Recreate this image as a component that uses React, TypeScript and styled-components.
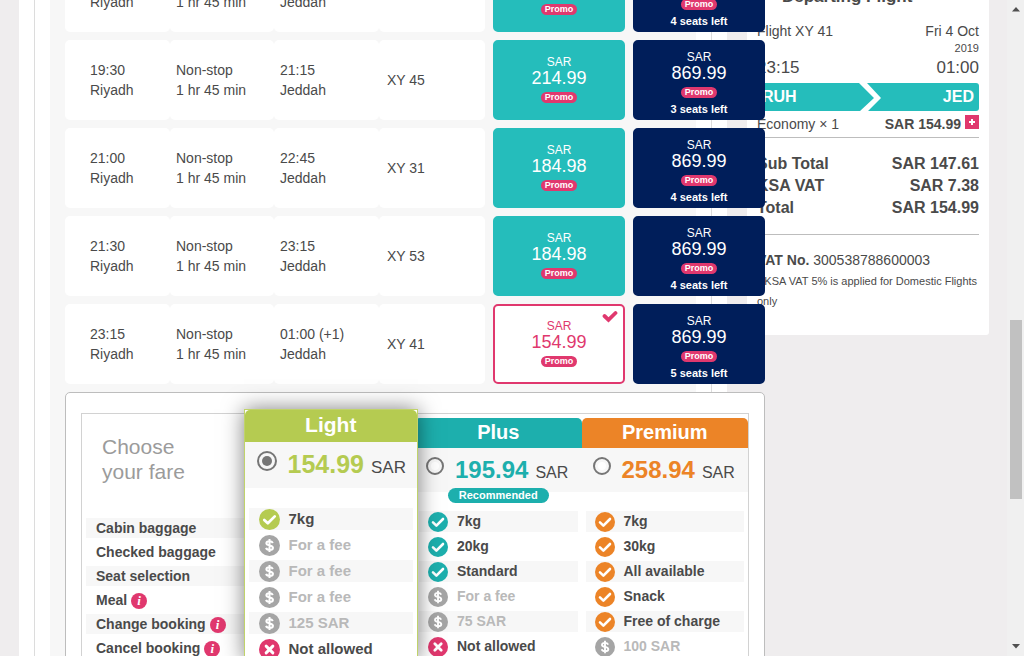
import React, { useState } from "react";
import styled, { createGlobalStyle } from "styled-components";

const color = {
  page: "#efedee",
  panel: "#f7f7f7",
  text: "#4a4a4a",
  muted: "#b9b9b9",
  teal: "#25bdbb",
  plus: "#1dafad",
  navy: "#001e5a",
  pink: "#e0386e",
  light: "#b5cb51",
  premium: "#ec8427",
  grey: "#a5a5a5",
  rule: "#bdbdbd",
};

const GlobalStyle = createGlobalStyle`
  * { box-sizing: border-box; }
  body {
    margin: 0;
    background: ${color.page};
    color: ${color.text};
    font: 14px/20px "Liberation Sans", Arial, sans-serif;
  }
  button { font-family: inherit; }
  ul, h2, h3, p { margin: 0; padding: 0; }
  ul { list-style: none; }
`;

/* ---------- page shell ---------- */

const Shell = styled.div`
  display: flex;
  height: 100vh;
  overflow: hidden;
`;

const Content = styled.div`
  flex: 1;
  min-width: 0;
  display: flex;
  align-items: flex-start;
  gap: 20px;
  margin-top: -48px;
  padding: 0 18px 0 19px;
`;

const Main = styled.main`
  flex: 1;
  min-width: 0;
  background: #fff;
  padding: 0 15px;
  position: relative;
  z-index: 1;
`;

const Frame = styled.div`
  border: solid #dcdcdc;
  border-width: 0 1px;
  padding: 0 15px;
`;

const Results = styled.div`
  background: ${color.panel};
  padding-left: 15px;
`;

const ScrollTrack = styled.div`
  width: 17px;
  display: flex;
  flex-direction: column;
  align-items: center;
  padding: 7px 0;
  background: #f0f0f0;
`;

const ScrollThumb = styled.div`
  width: 12px;
  height: 179px;
  margin: 308px 0 auto;
  background: #c1c1c1;
`;

/* ---------- flight list ---------- */

const Flights = styled.table`
  display: block;
  min-width: 700px;
`;

const FlightBody = styled.tbody`
  display: flex;
  flex-direction: column;
  gap: 8px;
`;

const FlightRow = styled.tr`
  display: grid;
  grid-template-columns: 105fr 104fr 105fr 106fr 140px 140px;
  height: 80px;
`;

const FlightCell = styled.td<{ $first?: boolean; $last?: boolean }>`
  display: flex;
  flex-direction: column;
  justify-content: center;
  padding: 0 0 0 ${(p) => (p.$first ? 25 : p.$last ? 8 : 6)}px;
  border-radius: 5px;
  background: #fff;
`;

const PriceCell = styled.td`
  display: flex;
  padding: 0 0 0 8px;
`;

type Tone = "teal" | "navy" | "chosen";

const PriceButton = styled.button<{ $tone: Tone }>`
  position: relative;
  flex: 1;
  display: flex;
  flex-direction: column;
  align-items: center;
  padding: ${(p) => (p.$tone === "navy" ? 8 : 13)}px 0 0;
  border: 2px solid
    ${(p) => (p.$tone === "chosen" ? color.pink : color[p.$tone])};
  border-radius: 5px;
  background: ${(p) => (p.$tone === "chosen" ? "#fff" : color[p.$tone])};
  color: ${(p) => (p.$tone === "chosen" ? color.pink : "#fff")};
  font-size: 12px;
  line-height: 14px;
`;

const Amount = styled.span`
  font-size: 18px;
  line-height: 18px;
`;

const Promo = styled.span`
  margin-top: 5px;
  padding: 0 4px;
  border-radius: 6px;
  background: ${color.pink};
  color: #fff;
  font-size: 9px;
  font-weight: bold;
  line-height: 11px;
`;

const Seats = styled.span`
  margin-top: 4px;
  font-size: 11px;
  font-weight: bold;
`;

const Tick = styled.svg`
  position: absolute;
  top: 4px;
  right: 5px;
`;

/* ---------- fare chooser ---------- */

const FareBox = styled.section`
  min-width: 700px;
  margin-top: 8px;
  padding: 20px 15px;
  border: 1px solid ${color.rule};
  border-radius: 5px;
  background: #fff;
`;

const FareGrid = styled.div`
  display: grid;
  grid-template-columns: repeat(4, minmax(0, 1fr));
  border: 1px solid #d2d2d2;
  padding-bottom: 40px;
`;

const FareLabels = styled.div`
  padding: 20px 4px 0;
`;

const FareTitle = styled.h2`
  padding-left: 16px;
  color: #9b9b9b;
  font-size: 21px;
  font-weight: normal;
  line-height: 25px;
`;

const LabelList = styled.ul`
  display: grid;
  gap: 4px;
  margin-top: 34px;
  font-weight: bold;
`;

const LabelRow = styled.li`
  display: flex;
  align-items: center;
  gap: 4px;
  height: 20px;
  padding-left: 10px;
  &:nth-child(odd) {
    background: ${color.panel};
  }
`;

const InfoButton = styled.button`
  width: 16px;
  height: 16px;
  margin-top: 2px;
  padding: 0;
  border: 0;
  border-radius: 50%;
  background: ${color.pink};
  color: #fff;
  font: italic bold 13px/16px "Liberation Serif", serif;
`;

const Fare = styled.div<{ $tone: string; $featured?: boolean }>`
  --tone: ${(p) => p.$tone};
  margin: ${(p) => (p.$featured ? "-5px -3px 0 -5px" : "4px 0 0")};
  ${(p) =>
    p.$featured &&
    `
    position: relative;
    z-index: 1;
    border: 1px solid #c0d36a;
    background: #fff;
    box-shadow: 0 0 20px rgba(0, 0, 0, 0.5);
    font-size: 15px;
  `}
`;

const FareName = styled.h3<{ $featured?: boolean }>`
  height: ${(p) => (p.$featured ? 32 : 30)}px;
  border-radius: 5px 5px 0 0;
  background: var(--tone);
  color: #fff;
  font-size: ${(p) => (p.$featured ? 21 : 20)}px;
  line-height: ${(p) => (p.$featured ? 30 : 28)}px;
  text-align: center;
`;

const FarePick = styled.label<{ $featured?: boolean }>`
  display: flex;
  align-items: flex-start;
  gap: 11px;
  height: ${(p) => (p.$featured ? 46 : 44)}px;
  padding: 9px 0 0 ${(p) => (p.$featured ? 12 : 11)}px;
  background: ${color.panel};
  font-size: ${(p) => (p.$featured ? 17 : 16)}px;
  line-height: 26px;
`;

const Radio = styled.input<{ $featured?: boolean }>`
  appearance: none;
  flex: none;
  width: ${(p) => (p.$featured ? 20 : 18)}px;
  height: ${(p) => (p.$featured ? 20 : 18)}px;
  margin: 0;
  padding: 3px;
  border: 2px solid #767676;
  border-radius: 50%;
  background: #fff content-box;
  &:checked {
    background-color: #767676;
  }
`;

const FarePrice = styled.span`
  display: flex;
  align-items: baseline;
  gap: 7px;
`;

const FareAmount = styled.strong<{ $featured?: boolean }>`
  color: var(--tone);
  font-size: ${(p) => (p.$featured ? 25 : 24)}px;
`;

const TagLine = styled.div<{ $featured?: boolean }>`
  display: flex;
  justify-content: center;
  height: ${(p) => (p.$featured ? 20 : 19)}px;
`;

const Tag = styled.span`
  height: 15px;
  margin-top: -4px;
  padding: 0 11px;
  border-radius: 8px;
  background: var(--tone);
  color: #fff;
  font-size: 11px;
  font-weight: bold;
  line-height: 14px;
`;

const Perks = styled.ul`
  display: grid;
  gap: 4px;
  margin: 0 4px;
  font-weight: bold;
`;

const Perk = styled.li<{ $featured?: boolean; $muted?: boolean }>`
  display: flex;
  align-items: center;
  gap: 9px;
  height: ${(p) => (p.$featured ? 22 : 21)}px;
  padding: ${(p) => (p.$featured ? "0 0 0 10px" : "0 0 1px 9px")};
  color: ${(p) => (p.$muted ? color.muted : color.text)};
  &:nth-child(odd) {
    background: ${color.panel};
  }
`;

/* ---------- booking summary ---------- */

const Summary = styled.aside`
  width: 242px;
  padding: 35px 10px 24px;
  border-radius: 0 0 3px 3px;
  background: #fff;
`;

const SummaryTitle = styled.h2`
  padding-left: 25px;
  font-size: 17px;
  line-height: 20px;
  white-space: nowrap;
`;

const Line = styled.div<{ $size?: number; $height?: number; $bold?: boolean }>`
  display: flex;
  justify-content: space-between;
  align-items: center;
  height: ${(p) => p.$height || 22}px;
  font-size: ${(p) => p.$size || 14}px;
  font-weight: ${(p) => (p.$bold ? "bold" : "normal")};
`;

const FlightInfo = styled.div`
  margin-top: 13px;
`;

const Year = styled.p`
  font-size: 11px;
  line-height: 12px;
  text-align: right;
`;

const Route = styled.div`
  display: flex;
  align-items: center;
  justify-content: space-between;
  height: 28px;
  margin: 2px 0;
  padding: 0 5px;
  border-radius: 3px;
  background: ${color.teal};
  color: #fff;
  font-size: 16px;
  font-weight: bold;
`;

const FareSum = styled.span`
  display: flex;
  align-items: center;
  gap: 4px;
  font-weight: bold;
`;

const MoreButton = styled.button`
  display: flex;
  align-items: center;
  justify-content: center;
  width: 14px;
  height: 14px;
  margin-bottom: 4px;
  padding: 0;
  border: 0;
  background: ${color.pink};
`;

const Totals = styled.div`
  margin: 2px 0 15px;
  padding: 15px 0;
  border: solid ${color.rule};
  border-width: 1px 0;
`;

const VatNote = styled.p`
  font-size: 11px;
  line-height: 20px;
`;

const VatNumber = styled.p`
  margin-bottom: 1px;
`;

/* ---------- data ---------- */

const flights = [
  { dep: "18:00", arr: "19:45", no: "XY 29", price: "184.98", seats: 4 },
  { dep: "19:30", arr: "21:15", no: "XY 45", price: "214.99", seats: 3 },
  { dep: "21:00", arr: "22:45", no: "XY 31", price: "184.98", seats: 4 },
  { dep: "21:30", arr: "23:15", no: "XY 53", price: "184.98", seats: 4 },
  { dep: "23:15", arr: "01:00 (+1)", no: "XY 41", price: "154.99", seats: 5 },
];

const labels: [string, boolean][] = [
  ["Cabin baggage", false],
  ["Checked baggage", false],
  ["Seat selection", false],
  ["Meal", true],
  ["Change booking", true],
  ["Cancel booking", true],
];

type Mark = "yes" | "fee" | "no";

const fares: {
  name: string;
  tone: string;
  price: string;
  tag?: string;
  featured?: boolean;
  perks: [Mark, string][];
}[] = [
  {
    name: "Light",
    tone: color.light,
    price: "154.99",
    featured: true,
    perks: [
      ["yes", "7kg"],
      ["fee", "For a fee"],
      ["fee", "For a fee"],
      ["fee", "For a fee"],
      ["fee", "125 SAR"],
      ["no", "Not allowed"],
    ],
  },
  {
    name: "Plus",
    tone: color.plus,
    price: "195.94",
    tag: "Recommended",
    perks: [
      ["yes", "7kg"],
      ["yes", "20kg"],
      ["yes", "Standard"],
      ["fee", "For a fee"],
      ["fee", "75 SAR"],
      ["no", "Not allowed"],
    ],
  },
  {
    name: "Premium",
    tone: color.premium,
    price: "258.94",
    perks: [
      ["yes", "7kg"],
      ["yes", "30kg"],
      ["yes", "All available"],
      ["yes", "Snack"],
      ["yes", "Free of charge"],
      ["fee", "100 SAR"],
    ],
  },
];

/* ---------- pieces ---------- */

const MarkSvg = styled.svg`
  flex: none;
  margin-top: 1px;
`;

function MarkIcon({ mark, size }: { mark: Mark; size: number }) {
  const fill =
    mark === "yes" ? "var(--tone)" : mark === "no" ? color.pink : color.grey;
  return (
    <MarkSvg width={size} height={size} viewBox="0 0 20 20" aria-hidden="true">
      <circle cx="10" cy="10" r="10" fill={fill} />
      {mark === "yes" && (
        <path
          d="M5 10.4 8.4 13.6 15 7"
          fill="none"
          stroke="#fff"
          strokeWidth="2.6"
          strokeLinecap="round"
          strokeLinejoin="round"
        />
      )}
      {mark === "no" && (
        <path
          d="M6.8 6.8 13.2 13.2M13.2 6.8 6.8 13.2"
          stroke="#fff"
          strokeWidth="2.8"
          strokeLinecap="round"
        />
      )}
      {mark === "fee" && (
        <path
          d="M13.2 7.6C12.6 6.4 11.5 5.9 10 5.9 8.2 5.9 7 6.6 7 7.9 7 10.7 13.3 9.1 13.3 12.2 13.3 13.5 12 14.3 10.1 14.3 8.4 14.3 7.2 13.7 6.7 12.3M10 3.8V16.3"
          fill="none"
          stroke="#fff"
          strokeWidth="1.9"
        />
      )}
    </MarkSvg>
  );
}

export default function App() {
  const [fare, setFare] = useState("Light");
  return (
    <>
      <GlobalStyle />
      <Shell>
        <Content>
          <Main>
            <Frame>
              <Results>
                <Flights>
                  <FlightBody>
                    {flights.map((f) => {
                      const chosen = f.no === "XY 41";
                      return (
                        <FlightRow key={f.no}>
                          <FlightCell $first>
                            <span>{f.dep}</span>
                            <span>Riyadh</span>
                          </FlightCell>
                          <FlightCell>
                            <span>Non-stop</span>
                            <span>1 hr 45 min</span>
                          </FlightCell>
                          <FlightCell>
                            <span>{f.arr}</span>
                            <span>Jeddah</span>
                          </FlightCell>
                          <FlightCell $last>{f.no}</FlightCell>
                          <PriceCell>
                            <PriceButton $tone={chosen ? "chosen" : "teal"}>
                              <span>SAR</span>
                              <Amount>{f.price}</Amount>
                              <Promo>Promo</Promo>
                              {chosen && (
                                <Tick width="16" height="13" viewBox="0 0 16 13">
                                  <path
                                    d="M2.5 6 6.5 9.8 13.5 3"
                                    fill="none"
                                    stroke={color.pink}
                                    strokeWidth="3.8"
                                    strokeLinecap="round"
                                  />
                                </Tick>
                              )}
                            </PriceButton>
                          </PriceCell>
                          <PriceCell>
                            <PriceButton $tone="navy">
                              <span>SAR</span>
                              <Amount>869.99</Amount>
                              <Promo>Promo</Promo>
                              <Seats>{f.seats} seats left</Seats>
                            </PriceButton>
                          </PriceCell>
                        </FlightRow>
                      );
                    })}
                  </FlightBody>
                </Flights>

                <FareBox>
                  <FareGrid>
                    <FareLabels>
                      <FareTitle>
                        Choose
                        <br />
                        your fare
                      </FareTitle>
                      <LabelList>
                        {labels.map(([label, info]) => (
                          <LabelRow key={label}>
                            {label}
                            {info && (
                              <InfoButton aria-label={`About ${label}`}>i</InfoButton>
                            )}
                          </LabelRow>
                        ))}
                      </LabelList>
                    </FareLabels>
                    {fares.map((f) => (
                      <Fare key={f.name} $tone={f.tone} $featured={f.featured}>
                        <FareName $featured={f.featured}>{f.name}</FareName>
                        <FarePick $featured={f.featured}>
                          <Radio
                            type="radio"
                            name="fare"
                            $featured={f.featured}
                            checked={fare === f.name}
                            onChange={() => setFare(f.name)}
                          />
                          <FarePrice>
                            <FareAmount $featured={f.featured}>{f.price}</FareAmount>
                            SAR
                          </FarePrice>
                        </FarePick>
                        <TagLine $featured={f.featured}>
                          {f.tag && <Tag>{f.tag}</Tag>}
                        </TagLine>
                        <Perks>
                          {f.perks.map(([mark, text], i) => (
                            <Perk key={i} $featured={f.featured} $muted={mark === "fee"}>
                              <MarkIcon mark={mark} size={f.featured ? 21 : 20} />
                              {text}
                            </Perk>
                          ))}
                        </Perks>
                      </Fare>
                    ))}
                  </FareGrid>
                </FareBox>
              </Results>
            </Frame>
          </Main>

          <Summary>
            <SummaryTitle>Departing Flight</SummaryTitle>
            <FlightInfo>
              <Line>
                <span>Flight XY 41</span>
                <span>Fri 4 Oct</span>
              </Line>
              <Year>2019</Year>
              <Line $size={17} $height={27}>
                <span>23:15</span>
                <span>01:00</span>
              </Line>
              <Route>
                <span>RUH</span>
                <svg width="22" height="28" viewBox="0 0 22 28" aria-hidden="true">
                  <path d="M0 0H8L22 15 9 28H1L15 15Z" fill="#fff" />
                </svg>
                <span>JED</span>
              </Route>
              <Line>
                <span>Economy × 1</span>
                <FareSum>
                  SAR 154.99
                  <MoreButton aria-label="Show fare details">
                    <svg width="6" height="6" viewBox="0 0 6 6">
                      <path d="M3 0V6M0 3H6" stroke="#fff" strokeWidth="2" />
                    </svg>
                  </MoreButton>
                </FareSum>
              </Line>
            </FlightInfo>
            <Totals>
              <Line $size={16} $bold>
                <span>Sub Total</span>
                <span>SAR 147.61</span>
              </Line>
              <Line $size={16} $bold>
                <span>KSA VAT</span>
                <span>SAR 7.38</span>
              </Line>
              <Line $size={16} $bold>
                <span>Total</span>
                <span>SAR 154.99</span>
              </Line>
            </Totals>
            <VatNumber>
              <strong>VAT No.</strong> 300538788600003
            </VatNumber>
            <VatNote>* KSA VAT 5% is applied for Domestic Flights only</VatNote>
          </Summary>
        </Content>

        <ScrollTrack aria-hidden="true">
          <svg width="10" height="5" viewBox="0 0 10 5">
            <path d="M1 4.5 5 0 9 4.5Z" fill="#505050" />
          </svg>
          <ScrollThumb />
          <svg width="10" height="5" viewBox="0 0 10 5">
            <path d="M1 0 5 4.5 9 0Z" fill="#505050" />
          </svg>
        </ScrollTrack>
      </Shell>
    </>
  );
}
